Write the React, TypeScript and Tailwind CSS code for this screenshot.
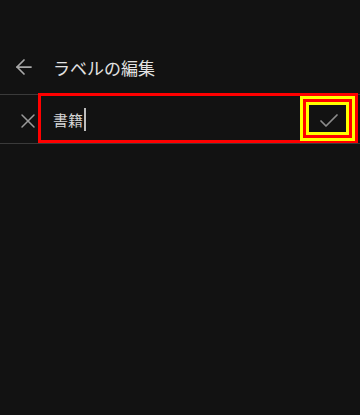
import { ArrowLeft, X, Check } from 'lucide-react'

export default function App() {
  return (
    <div
      className="relative w-[360px] h-[415px] bg-[#121212] overflow-hidden"
      style={{ fontFamily: '"Noto Sans CJK JP", "Noto Sans", sans-serif' }}
    >
      {/* Header */}
      <div className="h-[94px] flex items-end">
        <div className="h-[54px] flex items-center pl-3">
          <ArrowLeft size={24} strokeWidth={1.75} className="text-[#a8a8a8]" />
          <span className="ml-[17px] text-[17px] text-[#e2e2e2] leading-none">ラベルの編集</span>
        </div>
      </div>

      {/* Edit row */}
      <div className="h-[50px] border-y border-[#3a3a3a] flex items-center">
        <X size={24} strokeWidth={1.5} className="ml-4 mt-1 text-[#9a9a9a]" />
        <div className="ml-[13px] flex items-center">
          <span className="text-[15px] text-[#d6d6d6] leading-none">書籍</span>
          <span className="ml-[1px] w-[2px] h-[23px] bg-[#bdbdbd]" />
        </div>
        <div className="flex-1" />
        <Check size={24} strokeWidth={1.75} className="mr-[19px] mt-1 text-[#8c8c8c]" />
      </div>

      {/* Highlight overlays */}
      <div className="absolute left-[38px] top-[93px] w-[320px] h-[50px] border-[3px] border-[#ff0000]" />
      <div className="absolute left-[300px] top-[96px] w-[55px] h-[45px] border-[3px] border-[#ffff00]">
        <div className="h-full border-[3px] border-[#ff0000]">
          <div className="h-full border-[3px] border-[#ffff00]" />
        </div>
      </div>
    </div>
  )
}
